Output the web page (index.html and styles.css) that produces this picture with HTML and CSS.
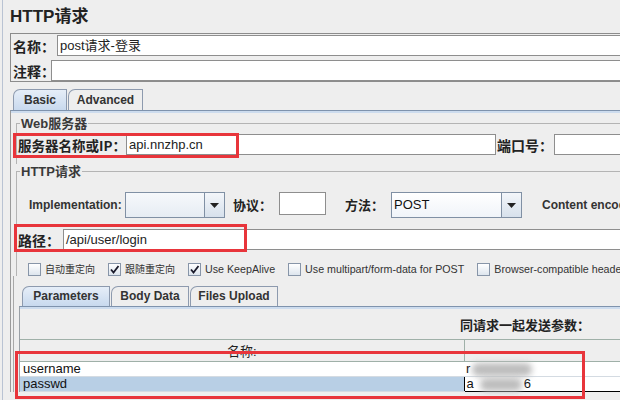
FILE: index.html
```html
<!DOCTYPE html>
<html lang="zh">
<head>
<meta charset="utf-8">
<title>HTTP请求</title>
<link rel="stylesheet" href="styles.css">
</head>
<body>
<div class="app">
  <h1 class="title">HTTP请求</h1>
  <div class="namebox">
    <div class="row name-row">
      <label class="lbl lbl-name">名称：</label>
      <div class="field">post请求-登录</div>
    </div>
    <div class="row comment-row">
      <label class="lbl lbl-comment">注释：</label>
      <div class="field"></div>
    </div>
  </div>

  <div class="tabs main-tabs">
    <div class="tab active tab-basic">Basic</div>
    <div class="tab tab-adv">Advanced</div>
  </div>
  <div class="tabpanel">
    <fieldset class="group web">
      <legend>Web服务器</legend>
      <div class="row server-row">
        <label class="lbl lbl-server">服务器名称或IP：</label>
        <div class="field server-field">api.nnzhp.cn</div>
        <label class="lbl lbl-port">端口号：</label>
        <div class="field port-field"></div>
      </div>
    </fieldset>

    <fieldset class="group http">
      <legend>HTTP请求</legend>
      <div class="row impl-row">
        <label class="elbl lbl-impl">Implementation:</label>
        <div class="combo combo-impl">
          <div class="combo-val"></div>
          <div class="combo-btn"><svg width="9" height="5" viewBox="0 0 9 5"><polygon points="0,0 9,0 4.5,5" fill="#222"/></svg></div>
        </div>
        <label class="lbl lbl-proto">协议：</label>
        <div class="field proto-field"></div>
        <label class="lbl lbl-method">方法：</label>
        <div class="combo combo-method">
          <div class="combo-val">POST</div>
          <div class="combo-btn"><svg width="9" height="5" viewBox="0 0 9 5"><polygon points="0,0 9,0 4.5,5" fill="#222"/></svg></div>
        </div>
        <label class="elbl lbl-enc">Content encoding:</label>
      </div>
      <div class="row path-row">
        <label class="lbl lbl-path">路径：</label>
        <div class="field">/api/user/login</div>
      </div>
      <div class="row checks">
        <div class="check"><span class="box"></span><span class="ctext cjk">自动重定向</span></div>
        <div class="check"><span class="box"><svg width="11" height="11" viewBox="0 0 11 11"><path d="M2 5.5 L4.5 8.5 L9.5 2" fill="none" stroke="#1a1a2a" stroke-width="1.8"/></svg></span><span class="ctext cjk">跟随重定向</span></div>
        <div class="check"><span class="box"><svg width="11" height="11" viewBox="0 0 11 11"><path d="M2 5.5 L4.5 8.5 L9.5 2" fill="none" stroke="#1a1a2a" stroke-width="1.8"/></svg></span><span class="ctext">Use KeepAlive</span></div>
        <div class="check"><span class="box"></span><span class="ctext">Use multipart/form-data for POST</span></div>
        <div class="check"><span class="box"></span><span class="ctext">Browser-compatible headers</span></div>
      </div>
    </fieldset>

    <div class="params">
      <div class="tabs sub-tabs">
        <div class="tab active tab-params">Parameters</div>
        <div class="tab tab-body">Body Data</div>
        <div class="tab tab-files">Files Upload</div>
      </div>
      <div class="subpanel">
        <div class="caption">同请求一起发送参数：</div>
        <table class="args">
          <thead>
            <tr><th class="c-name">名称:</th><th class="c-val"></th></tr>
          </thead>
          <tbody>
            <tr><td class="c-name">username</td><td class="c-val">r<span class="blur b1"></span></td></tr>
            <tr class="sel"><td class="c-name">passwd</td><td class="c-val editing">a<span class="blur b2"></span>6</td></tr>
          </tbody>
        </table>
      </div>
    </div>
  </div>

  <div class="mark mark-server"></div>
  <div class="mark mark-path"></div>
  <div class="mark mark-params"></div>
</div>
</body>
</html>
```

FILE: styles.css
```css
* { box-sizing: border-box; }
html, body { margin: 0; padding: 0; overflow: hidden; background: #eeeeee; }
body {
  width: 620px;
  height: 400px;
  font-family: "Liberation Sans", "Noto Sans CJK SC", sans-serif;
  font-size: 13px;
  color: #222;
}
.app {
  position: relative;
  margin-left: 2px;
  border-left: 1px solid #b9c3d3;
  padding-left: 7px;
  width: 1000px;
  height: 400px;
}
.title {
  margin: 0;
  padding-top: 7px;
  height: 33px;
  font-size: 17px;
  line-height: 20px;
  font-weight: bold;
  color: #222;
}
.row { display: flex; align-items: center; }
.lbl {
  flex: none;
  font-family: "Noto Sans CJK SC", sans-serif;
  font-weight: bold;
  font-size: 14px;
  line-height: 16px;
  color: #222;
  white-space: nowrap;
}
.elbl {
  flex: none;
  font-weight: bold;
  font-size: 12px;
  color: #333;
  white-space: nowrap;
}
.field {
  flex: 1;
  height: 21px;
  background: #fff;
  border: 1px solid #8e8e8e;
  padding-left: 2px;
  line-height: 19px;
  font-size: 13px;
  color: #222;
  white-space: nowrap;
}

/* name box */
.namebox {
  border: 1px solid #8c8c8c;
  border-right: 0;
  padding: 1px 0 0 2px;
}
.name-row { height: 21px; }
.comment-row { height: 21px; margin-top: 4px; }
.lbl-name { width: 44px; }
.lbl-comment { width: 38px; }

/* tabs */
.tabs { display: flex; align-items: flex-end; }
.tab {
  height: 21px;
  border: 1px solid #8d9aae;
  border-bottom: 0;
  border-top-left-radius: 7px;
  font-weight: bold;
  font-size: 12px;
  line-height: 20px;
  text-align: center;
  background: #eeeeee;
  color: #333;
}
.tab + .tab { margin-left: 1px; }
.tab.active { background: linear-gradient(#e6eef8, #c8d9ee); }
.main-tabs { margin-top: 7px; padding-left: 3px; }
.tab-basic { width: 54px; }
.tab-adv { width: 75px; }

.tabpanel {
  border-top: 1px solid #7f93ad;
  border-left: 1px solid #9a9a9a;
}
.tabpanel::before, .subpanel::before {
  content: "";
  display: block;
  height: 2px;
  background: #cddcee;
}

/* groups */
.group {
  border: 1px solid #b4b4b4;
  border-right: 0;
  border-bottom: 0;
  margin: 0 0 0 5px;
  padding: 0 0 0 1px;
  min-width: 0;
}
.group legend {
  padding: 0 1px;
  margin-left: 2px;
  font-family: "Liberation Sans", "Noto Sans CJK SC", sans-serif;
  font-size: 13px;
  font-weight: bold;
  line-height: 15px;
  color: #3a3a3a;
}
.web { margin-top: 3px; padding-bottom: 9px; }
.server-row { margin-top: 3px; height: 21px; }
.lbl-server { width: 108px; font-size: 13.5px; }
.server-field { flex: none; width: 370px; }
.lbl-port { width: 58px; padding-left: 1px; }
.port-field { flex: 1; }

/* http group */
.impl-row { margin-top: 13px; height: 26px; align-items: center; padding-left: 11px; }
.lbl-impl { width: 96px; }
.combo {
  flex: none;
  display: flex;
  height: 26px;
  border: 1px solid #8090a4;
  align-self: flex-start;
}
.combo-val {
  flex: 1;
  background: linear-gradient(#f6f8fb, #e6ecf3);
  padding-left: 2px;
  line-height: 24px;
  font-size: 13px;
  color: #111;
}
.combo-method .combo-val { background: linear-gradient(#ffffff, #f0f4f9); }
.combo-btn {
  width: 20px;
  border-left: 1px solid #8090a4;
  background: linear-gradient(#f3f6fa, #d7e1ec);
  display: flex;
  align-items: center;
  justify-content: center;
}
.combo-impl { width: 100px; }
.lbl-proto { width: 46px; margin-left: 8px; font-size: 13px; }
.proto-field { flex: none; width: 47px; height: 23px; align-self: flex-start; }
.lbl-method { width: 46px; margin-left: 19px; font-size: 13px; }
.combo-method { width: 131px; }
.lbl-enc { margin-left: 20px; }

.path-row { margin-top: 11px; height: 21px; }
.lbl-path { width: 45px; }

.checks { margin-top: 13px; height: 13px; padding-left: 10px; gap: 13px; }
.check { display: flex; align-items: center; flex: none; }
.box {
  width: 13px;
  height: 13px;
  border: 1px solid #8795a8;
  background: linear-gradient(#ffffff, #dde5ee);
  display: flex;
  align-items: center;
  justify-content: center;
}
.ctext {
  margin-left: 4px;
  font-size: 10.7px;
  line-height: 13px;
  color: #333;
  white-space: nowrap;
}
.ctext.cjk { font-size: 10px; }

/* params */
.params {
  margin-left: 2px;
  border-left: 1px solid #a8a8a8;
  padding-top: 10px;
}
.sub-tabs { padding-left: 8px; }
.tab-params { width: 88px; height: 20px; line-height: 19px; }
.tab-body { width: 78px; height: 20px; line-height: 19px; }
.tab-files { width: 88px; height: 20px; line-height: 19px; }
.subpanel {
  margin-left: 5px;
  border-top: 1px solid #7f93ad;
  border-left: 1px solid #9aa0a6;
}
.caption {
  margin-top: 8px;
  padding-left: 440px;
  height: 15px;
  font-family: "Noto Sans CJK SC", sans-serif;
  font-weight: bold;
  font-size: 13px;
  line-height: 15px;
  color: #222;
  white-space: nowrap;
}
.args {
  margin-top: 7px;
  border-collapse: collapse;
  width: 700px;
}
.args th {
  height: 22px;
  border-top: 1px solid #9fb0a8;
  border-bottom: 1px solid #9fb0a8;
  font-weight: normal;
  font-size: 13px;
  padding: 0;
  color: #222;
}
.args th.c-val { border-left: 1px solid #9fb0a8; }
.args .c-name { width: 444px; }
.args td {
  height: 15px;
  padding: 0 0 0 3px;
  font-size: 13px;
  line-height: 14px;
  background: #fff;
  border-bottom: 1px solid #d4dbe2;
  color: #111;
  white-space: nowrap;
}
.args td.c-val { padding-left: 2px; }
.args tr.sel td { background: #b8cfe5; }
.args tr.sel td.editing { background: #fff; border: 1px solid #000; }
.blur {
  display: inline-block;
  vertical-align: middle;
  height: 13px;
  border-radius: 6px;
  background: #bdbdbd;
  filter: blur(3px);
}
.b1 { width: 60px; margin-left: 2px; }
.b2 { width: 42px; margin: 0 2px 0 6px; }

/* annotation boxes drawn over the screenshot */
.mark {
  position: absolute;
  border: 3px solid #e8353b;
}
.mark-server { left: 10px; top: 133px; width: 226px; height: 25px; }
.mark-path { left: 11px; top: 224px; width: 233px; height: 28px; }
.mark-params { left: 12px; top: 351px; width: 570px; height: 48px; }
```
